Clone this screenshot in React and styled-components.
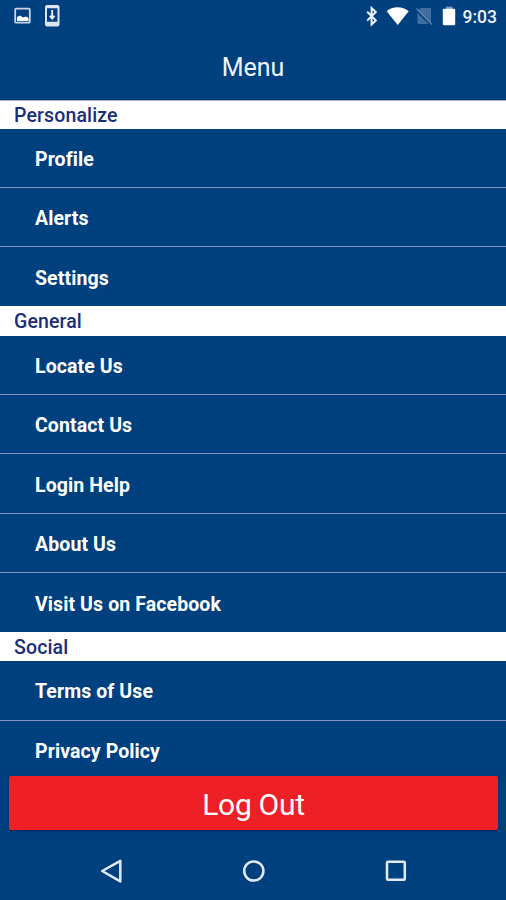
import React from 'react'
import styled, { createGlobalStyle } from 'styled-components'

const GlobalStyle = createGlobalStyle`
* {
    box-sizing: border-box;
}
body {
    margin: 0;
    background: #00407f;
    font-family: Roboto, "Liberation Sans", sans-serif;
}
`

const Screen = styled.div`
height: 900px;
display: flex;
flex-direction: column;
overflow: hidden;
background: #00407f;
color: #fff;
`

const StatusBar = styled.div`
height: 32px;
flex: none;
display: flex;
justify-content: space-between;
padding: 0 9px 0 14px;
`

const StatusIcons = styled.svg`
display: block;
height: 32px;
width: ${props => props.$width}px;
`

const StatusRight = styled.div`
display: flex;
align-items: center;
`

const Clock = styled.span`
font-size: 17.5px;
font-weight: 500;
line-height: 32px;
padding-top: 1px;
color: #eef2fb;
`

const Header = styled.h1`
height: 67.5px;
flex: none;
margin: 0;
padding-top: 3px;
display: flex;
align-items: center;
justify-content: center;
font-size: 25px;
font-weight: 400;
letter-spacing: -0.1px;
color: #f0f3fb;
`

const MenuList = styled.div`
height: 676.5px;
flex: none;
overflow: hidden;
`

const SectionTitle = styled.h2`
height: 29.2px;
margin: 0;
padding: 0 14px;
line-height: ${props => props.$first ? 29 : 32}px;
font-size: 19.5px;
font-weight: 500;
letter-spacing: 0.13px;
color: #1b2e7b;
background: #fff;
border-top: ${props => props.$first ? '1px solid #b5aebb' : 'none'};
`

const MenuItem = styled.div`
height: 59.35px;
padding: 3px 35px 0;
display: flex;
align-items: center;
font-size: 19.5px;
font-weight: 700;
letter-spacing: 0.1px;
border-bottom: 1px solid #8293be;

&:last-child {
    height: 59.1px;
    border-bottom: none;
}
`

const LogOut = styled.button`
flex: none;
height: 54px;
margin: 0 8px 0 9px;
padding: 3px 0 0;
border: none;
border-radius: 2px;
background: #ef1f26;
color: #fff;
font-family: inherit;
font-size: 30px;
font-weight: 400;
letter-spacing: -0.3px;
box-shadow: 0 1px 2px rgba(0, 20, 60, 0.5);
`

const NavBar = styled.div`
flex: 1;
display: flex;
justify-content: space-between;
align-items: center;
padding: 12px 98px 0 99px;
`

const NavIcon = styled.svg`
display: block;
width: 24px;
height: 24px;
fill: none;
stroke: #e4e9fa;
stroke-width: 2.5;
stroke-linejoin: round;
`

const sections = [
    { title: 'Personalize', items: ['Profile', 'Alerts', 'Settings'] },
    { title: 'General', items: ['Locate Us', 'Contact Us', 'Login Help', 'About Us', 'Visit Us on Facebook'] },
    { title: 'Social', items: ['Terms of Use', 'Privacy Policy'] },
]

function Notifications() {
    return (
        <StatusIcons $width={48} viewBox="0 0 48 32">
            <rect x="1.2" y="8.7" width="14.6" height="14" rx="1" fill="none" stroke="#cbd5ed" strokeWidth="1.8" />
            <path d="M3 21V17l3-1.5 3 2 3-1 2.5 1.5v3H3z" fill="#fff" />
            <path fillRule="evenodd" d="M33 5h10.5a2 2 0 0 1 2 2v17.5a2 2 0 0 1-2 2H33a2 2 0 0 1-2-2V7a2 2 0 0 1 2-2zM33 8.3v13.5h10.5V8.3z" fill="#dde4f5" />
            <path d="M38.2 10v8M35.9 15.8l2.3 2.7 2.3-2.7" fill="none" stroke="#fff" strokeWidth="1.8" />
        </StatusIcons>
    )
}

function SystemIcons() {
    return (
        <StatusIcons $width={98} viewBox="364 0 98 32">
            <path d="M366.2 11.8l8.6 8.6-4.2 4V8l4.2 4-8.6 8.6" fill="none" stroke="#f0f4ff" strokeWidth="2" />
            <path d="M385.7 11.2Q390 7.2 396.5 7.2T407.7 11.2L396.7 25z" fill="#fff" />
            <path d="M416.5 24V12l3-4H430v16z" fill="#406f9f" />
            <path d="M415 9.5l15.5 15.5" stroke="#00407f" strokeWidth="2.6" />
            <path d="M415.5 8.5l15.5 16" stroke="#628ab8" strokeWidth="1.3" />
            <rect x="445" y="6.6" width="6.5" height="3" fill="#7d9ac6" />
            <rect x="441.8" y="8.8" width="12.4" height="16.5" rx="1" fill="#fff" />
        </StatusIcons>
    )
}

export default function App() {
return (
    <Screen>
        <GlobalStyle />
        <StatusBar>
            <Notifications />
            <StatusRight>
                <SystemIcons />
                <Clock>9:03</Clock>
            </StatusRight>
        </StatusBar>
        <Header>Menu</Header>

        <MenuList>
            {sections.map((section, index) => (
                <section key={section.title}>
                    <SectionTitle $first={index === 0}>{section.title}</SectionTitle>
                    {section.items.map(item => <MenuItem key={item}>{item}</MenuItem>)}
                </section>
            ))}
        </MenuList>

        <LogOut>Log Out</LogOut>

        <NavBar>
            <NavIcon viewBox="0 0 24 24"><path d="M3.2 12L21.3 1.8v20.6z" /></NavIcon>
            <NavIcon viewBox="0 0 24 24"><circle cx="11.8" cy="12" r="9.6" /></NavIcon>
            <NavIcon viewBox="0 0 24 24"><rect x="3" y="2.8" width="17.8" height="18" rx="1" /></NavIcon>
        </NavBar>
    </Screen>
  )
}
